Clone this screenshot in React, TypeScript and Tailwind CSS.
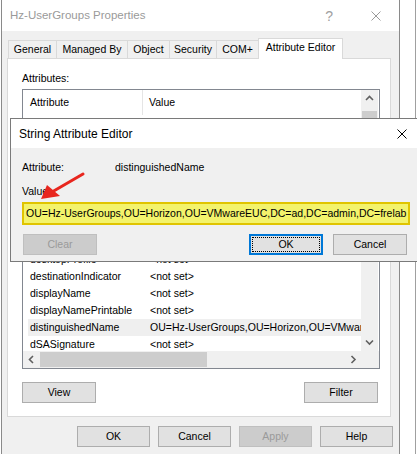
import React from "react";

const font = { fontFamily: '"Liberation Sans", Arial, sans-serif' };

function Btn({ children, w = "w-[73px]", disabled = false, focused = false }: { children: React.ReactNode; w?: string; disabled?: boolean; focused?: boolean }) {
  if (focused) {
    return (
      <div className={`${w} h-[21px] border-2 border-[#0078d7] bg-[#e1e1e1] p-px`}>
        <div className="w-full h-full border border-dotted border-black flex items-center justify-center text-black">{children}</div>
      </div>
    );
  }
  return (
    <div
      className={`${w} h-[21px] border flex items-center justify-center ${
        disabled ? "border-[#bfbfbf] bg-[#cccccc] text-[#9a9a9a]" : "border-[#adadad] bg-[#e1e1e1] text-black"
      }`}
    >
      {children}
    </div>
  );
}

function Chevron({ dir }: { dir: "up" | "down" | "left" | "right" }) {
  const pts = {
    up: "1,5 4.5,1.5 8,5",
    down: "1,1.5 4.5,5 8,1.5",
    left: "5,1 1.5,4.5 5,8",
    right: "1.5,1 5,4.5 1.5,8",
  }[dir];
  const vb = dir === "up" || dir === "down" ? "0 0 9 7" : "0 0 7 9";
  const cls = dir === "up" || dir === "down" ? "w-[9px] h-[7px]" : "w-[7px] h-[9px]";
  return (
    <svg viewBox={vb} className={cls}>
      <polyline points={pts} fill="none" stroke="#606060" strokeWidth="1.6" />
    </svg>
  );
}

const rows: [string, string][] = [
  ["adminDescription", "<not set>"],
  ["adminDisplayName", "<not set>"],
  ["altSecurityIdentities", "<not set>"],
  ["businessCategory", "<not set>"],
  ["c", "<not set>"],
  ["cn", "Hz-UserGroups"],
  ["controlAccessRights", "<not set>"],
  ["description", "<not set>"],
  ["desktopProfile", "<not set>"],
  ["destinationIndicator", "<not set>"],
  ["displayName", "<not set>"],
  ["displayNamePrintable", "<not set>"],
  ["distinguishedName", "OU=Hz-UserGroups,OU=Horizon,OU=VMwareEUC,DC=ad,DC=admin,DC=frelab"],
  ["dSASignature", "<not set>"],
];

const tabs = ["General", "Managed By", "Object", "Security", "COM+"];
const tabW = ["w-[49px]", "w-[72px]", "w-[43px]", "w-[48px]", "w-[43px]"];

export default function App() {
  return (
    <div className="relative w-[417px] h-[454px] bg-white overflow-hidden text-[10.5px] leading-none text-black" style={font}>
      {/* background window edge */}
      <div className="absolute left-[415px] top-0 w-px h-full bg-[#a0a0a0]" />

      {/* Parent window */}
      <div className="absolute left-px top-0 w-[399px] h-[454px] border-x border-[#8a8a8a] bg-[#f0f0f0] flex flex-col">
        <div className="h-[31px] bg-white flex items-center pl-[8px] pr-[16px] shrink-0">
          <span className="text-[11.5px] text-[#9a9a9a]">Hz-UserGroups Properties</span>
          <span className="ml-auto text-[14px] text-[#a0a0a0] mr-[38px]">?</span>
          <svg viewBox="0 0 10 10" className="w-[10px] h-[10px] mr-[2px]">
            <path d="M0.5 0.5 L9.5 9.5 M9.5 0.5 L0.5 9.5" stroke="#9a9a9a" strokeWidth="1" />
          </svg>
        </div>

        {/* tabs */}
        <div className="flex items-end h-[20px] mt-[7px] ml-[6px] relative z-10">
          {tabs.map((t, i) => (
            <div
              key={t}
              className={`${tabW[i]} h-[18px] border border-b-0 border-[#d9d9d9] ${i > 0 ? "-ml-px" : ""} bg-[#f0f0f0] flex items-center justify-center pb-px`}
            >
              {t}
            </div>
          ))}
          <div className="w-[85px] h-[21px] -ml-px -mb-px border border-b-0 border-[#d9d9d9] bg-white flex items-center justify-center pb-[3px]">
            Attribute Editor
          </div>
        </div>

        {/* panel */}
        <div className="ml-[5px] w-[384px] h-[359px] border border-[#d9d9d9] bg-white pl-[14px] flex flex-col shrink-0">
          <div className="mt-[14px] h-[11px]">Attributes:</div>
          <div className="mt-[5px] w-[358px] h-[280px] border border-[#828790] flex flex-col">
            <div className="flex h-[261px]">
              <div className="w-[338px] overflow-hidden">
                <div className="h-[25px] flex items-center">
                  <div className="w-[120px] h-full flex items-center pl-[7px] border-r border-[#e5e5e5]">Attribute</div>
                  <div className="pl-[6px]">Value</div>
                </div>
                <div className="pl-[5px]">
                  {rows.map(([a, v]) => (
                    <div
                      key={a}
                      className={`h-[17px] flex items-center whitespace-nowrap ${a === "distinguishedName" ? "bg-[#efefef]" : ""}`}
                    >
                      <div className="w-[115px] pl-[2px] shrink-0">{a}</div>
                      <div className="pl-[7px]">{v}</div>
                    </div>
                  ))}
                </div>
              </div>
              <div className="w-[17px] h-full bg-[#f0f0f0] flex flex-col items-center">
                <div className="h-[17px] w-full flex items-center justify-center">
                  <Chevron dir="up" />
                </div>
                <div className="w-[15px] h-[90px] mt-[4px] bg-[#cdcdcd]" />
                <div className="mt-auto h-[17px] w-full flex items-center justify-center">
                  <Chevron dir="down" />
                </div>
              </div>
            </div>
            <div className="flex h-[17px] bg-[#f0f0f0]">
              <div className="w-[17px] flex items-center justify-center">
                <Chevron dir="left" />
              </div>
              <div className="w-[167px] my-px bg-[#cdcdcd]" />
              <div className="ml-auto w-[17px] flex items-center justify-center mr-[17px]">
                <Chevron dir="right" />
              </div>
            </div>
          </div>
          <div className="mt-[13px] w-[356px] flex justify-between">
            <Btn w="w-[74px]">View</Btn>
            <Btn w="w-[74px]">Filter</Btn>
          </div>
        </div>

        {/* bottom buttons */}
        <div className="mt-[9px] flex justify-end gap-[8px] mr-[6px]">
          <Btn>OK</Btn>
          <Btn>Cancel</Btn>
          <Btn disabled>Apply</Btn>
          <Btn>Help</Btn>
        </div>
      </div>

      {/* String Attribute Editor dialog */}
      <div className="absolute left-[10px] top-[118px] w-[420px] h-[144px] border border-[#7a7a7a] bg-[#f0f0f0] flex flex-col">
        <div className="h-[29px] bg-white flex items-center pl-[8px] shrink-0">
          <span className="text-[12px]">String Attribute Editor</span>
          <svg viewBox="0 0 10 10" className="w-[10px] h-[10px] ml-[265px]">
            <path d="M0.5 0.5 L9.5 9.5 M9.5 0.5 L0.5 9.5" stroke="#000" strokeWidth="1" />
          </svg>
        </div>
        <div className="pl-[11px] flex flex-col">
          <div className="mt-[14px] h-[11px] flex">
            <span className="w-[93px]">Attribute:</span>
            <span>distinguishedName</span>
          </div>
          <div className="mt-[13px] h-[11px]">Value:</div>
          <div className="mt-[5px] w-[388px] h-[23px] border-2 border-[#e0c400] bg-[#f3f36c] flex items-center pl-[2px] whitespace-nowrap overflow-hidden">
            OU=Hz-UserGroups,OU=Horizon,OU=VMwareEUC,DC=ad,DC=admin,DC=frelab
          </div>
          <div className="mt-[9px] flex">
            <div className="ml-px">
              <Btn w="w-[74px]" disabled>Clear</Btn>
            </div>
            <div className="ml-[152px]">
              <Btn w="w-[74px]" focused>OK</Btn>
            </div>
            <div className="ml-[10px]">
              <Btn w="w-[74px]">Cancel</Btn>
            </div>
          </div>
        </div>
      </div>

      {/* red arrow */}
      <svg className="absolute left-0 top-0 w-[417px] h-[454px] pointer-events-none" viewBox="0 0 417 454">
        <line x1="83" y1="174" x2="52" y2="192" stroke="#e8261e" strokeWidth="3" strokeLinecap="round" />
        <polygon points="41,199 47,185 60,196" fill="#e8261e" />
      </svg>
    </div>
  );
}
